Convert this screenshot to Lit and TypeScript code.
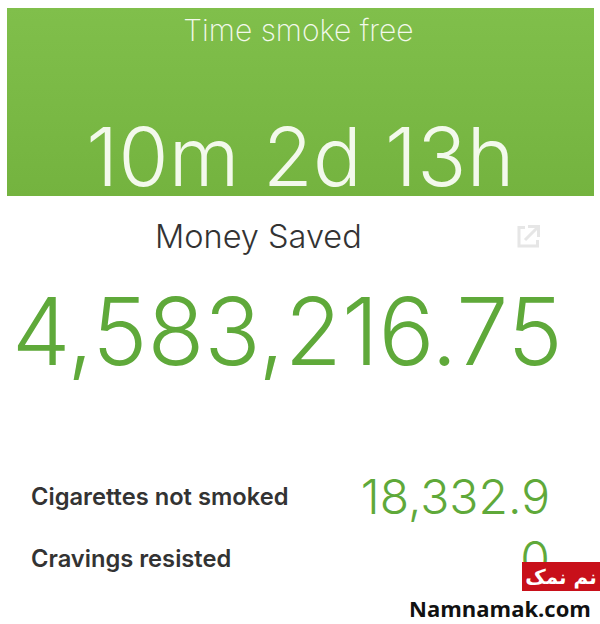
import { LitElement, html, css } from "lit";
import { customElement } from "lit/decorators.js";

@customElement("app-root")
export class AppRoot extends LitElement {
  static styles = css`
    :host { display: block; width: 600px; height: 624px; position: relative; overflow: hidden; background: #fff; font-family: "Inter", "Liberation Sans", sans-serif; }
    .banner { margin: 8px 6px 0 7px; height: 188px; background: linear-gradient(#80bf4b, #74b33f); color: #f3f9ec; display: flex; flex-direction: column; align-items: center; box-sizing: border-box; }
    .banner .t { font-size: 30px; font-weight: 200; line-height: 44px; margin-right: 4px; }
    .banner .v { font-size: 81px; font-weight: 300; line-height: 90px; margin-top: 60px; letter-spacing: 0.3px; white-space: nowrap; }
    .money { display: grid; grid-template-columns: 1fr auto; height: 80px; align-items: center; padding: 0 59px 0 155px; }
    .money .l { font-size: 32.500px; font-weight: 300; color: #333; }
    .money svg { display: block; }
    .big { font-size: 93px; font-weight: 300; color: #5fa93a; line-height: 110px; padding-left: 12px; white-space: nowrap; }
    .rows { margin-top: 84px; padding: 0 50px 0 31px; display: grid; row-gap: 10px; }
    .row { display: flex; justify-content: space-between; align-items: center; height: 52px; }
    .row .n { font-size: 23.700px; font-weight: 600; color: #333; }
    .row .c { font-size: 48px; font-weight: 300; color: #5fa93a; }
    .mark { position: absolute; right: 0; top: 562px; width: 78px; height: 29px; background: #c8101a; color: #fff; font: 700 20px "DejaVu Sans", sans-serif; white-space: nowrap; display: flex; align-items: center; justify-content: center; }
    .site { position: absolute; left: 409px; top: 593px; font: 700 22px "Open Sans", sans-serif; color: #111; }
  `;
  render() {
    return html`
      <div class="banner">
        <div class="t">Time smoke free</div>
        <div class="v">10m 2d 13h</div>
      </div>
      <div class="money">
        <div class="l">Money Saved</div>
        <svg width="24" height="24" viewBox="0 0 24 24" fill="none" stroke="#e6e6e6" stroke-width="3">
          <path d="M8 3.500H2V22H20.500V16"/><path d="M8 16L20 4M11 2.500H21.500V13"/>
        </svg>
      </div>
      <div class="big">4,583,216.75</div>
      <div class="rows">
        <div class="row"><span class="n">Cigarettes not smoked</span><span class="c">18,332.9</span></div>
        <div class="row"><span class="n">Cravings resisted</span><span class="c">0</span></div>
      </div>
      <div class="mark" dir="rtl">نم نمک</div>
      <div class="site">Namnamak.com</div>
    `;
  }
}
